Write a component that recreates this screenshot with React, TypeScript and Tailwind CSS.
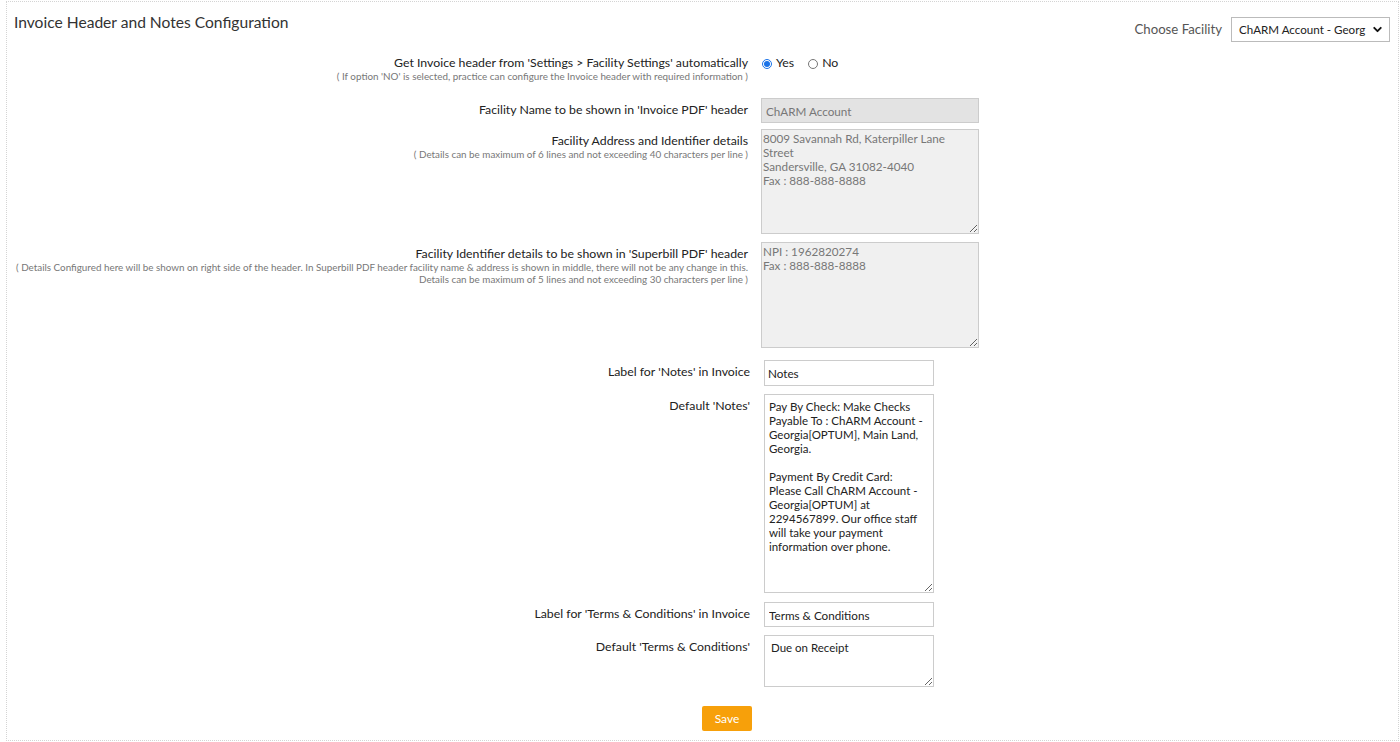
import React from 'react';
import { ChevronDown } from 'lucide-react';

const font = { fontFamily: 'Lato, "Open Sans", Arial, sans-serif' };

function Label({ text, notes = [] as string[] }: { text: string; notes?: string[] }) {
  return (
    <div className="pt-[5px] text-right">
      <div className="text-[12.3px] leading-[14px] text-[#222]">{text}</div>
      {notes.map((n, i) => (
        <div key={i} className="text-[9.85px] leading-[12px] text-[#777]">
          {n}
        </div>
      ))}
    </div>
  );
}

export default function App() {
  const notes =
    'Pay By Check: Make Checks\nPayable To : ChARM Account -\nGeorgia[OPTUM], Main Land,\nGeorgia.\n\nPayment By Credit Card:\nPlease Call ChARM Account -\nGeorgia[OPTUM] at\n2294567899. Our office staff\nwill take your payment\ninformation over phone.';

  return (
    <div className="bg-white min-h-[742px] pt-[1px]" style={font}>
      <div className="ml-[6px] w-[1393px] h-[740px] border border-dotted border-[#d4d4d4] px-[7px]">
        {/* Header */}
        <div className="flex justify-between items-start pt-[10px] pr-[1px]">
          <h1 className="text-[15.6px] leading-[20px] text-[#333] font-normal">
            Invoice Header and Notes Configuration
          </h1>
          <div className="flex items-center gap-[9px] mt-[5px]">
            <span className="text-[13.2px] text-[#555]">Choose Facility</span>
            <div className="relative w-[159px] h-[25px] border border-[#bbb] bg-white flex items-center pl-[7px]">
              <span className="text-[11.6px] text-[#222] whitespace-nowrap">ChARM Account - Georg</span>
              <div className="absolute right-[5px] top-0 bottom-0 flex items-center">
                <ChevronDown size={13} strokeWidth={3.5} className="text-[#111]" />
              </div>
            </div>
          </div>
        </div>

        {/* Row 1 */}
        <div className="flex items-start gap-[13px] mt-[9px]">
          <div className="w-[734px]">
            <Label
              text="Get Invoice header from 'Settings > Facility Settings' automatically"
              notes={["( If option 'NO' is selected, practice can configure the Invoice header with required information )"]}
            />
          </div>
          <div className="flex items-center h-[25px] text-[12.3px] text-[#222]">
            <input type="radio" name="auto" defaultChecked className="w-[10px] h-[10px] m-0 ml-[1px] accent-[#1a73e8]" />
            <span className="ml-[4px] mr-[14px]">Yes</span>
            <input type="radio" name="auto" className="w-[10px] h-[10px] m-0" />
            <span className="ml-[4px]">No</span>
          </div>
        </div>

        {/* Row 2 */}
        <div className="flex items-start gap-[13px] mt-[16px]">
          <div className="w-[734px]">
            <Label text="Facility Name to be shown in 'Invoice PDF' header" />
          </div>
          <input
            disabled
            value="ChARM Account"
            readOnly
            className="w-[218px] h-[25px] border border-[#ccc] bg-[#e3e3e3] pl-[4px] text-[11.7px] text-[#777] outline-none"
          />
        </div>

        {/* Row 3 */}
        <div className="flex items-start gap-[13px] mt-[6px]">
          <div className="w-[734px]">
            <Label
              text="Facility Address and Identifier details"
              notes={['( Details can be maximum of 6 lines and not exceeding 40 characters per line )']}
            />
          </div>
          <textarea
            disabled
            defaultValue={'8009 Savannah Rd, Katerpiller Lane\nStreet\nSandersville, GA 31082-4040\nFax : 888-888-8888'}
            className="w-[218px] h-[105px] border border-[#ccc] bg-[#f0f0f0] pl-[1px] pt-[1px] text-[11.7px] leading-[14px] text-[#777] outline-none resize"
            style={font}
          />
        </div>

        {/* Row 4 */}
        <div className="flex items-start gap-[13px] mt-[8px]">
          <div className="w-[734px]">
            <Label
              text="Facility Identifier details to be shown in 'Superbill PDF' header"
              notes={[
                '( Details Configured here will be shown on right side of the header. In Superbill PDF header facility name & address is shown in middle, there will not be any change in this.',
                'Details can be maximum of 5 lines and not exceeding 30 characters per line )',
              ]}
            />
          </div>
          <textarea
            disabled
            defaultValue={'NPI : 1962820274\nFax : 888-888-8888'}
            className="w-[218px] h-[106px] border border-[#ccc] bg-[#f0f0f0] pl-[1px] pt-[1px] text-[11.7px] leading-[14px] text-[#777] outline-none resize"
            style={font}
          />
        </div>

        {/* Row 5 */}
        <div className="flex items-start gap-[14px] mt-[12px]">
          <div className="w-[736px]">
            <Label text="Label for 'Notes' in Invoice" />
          </div>
          <input
            defaultValue="Notes"
            className="w-[170px] h-[26px] border border-[#ccc] bg-white pl-[3px] text-[11.7px] text-[#222] outline-none"
          />
        </div>

        {/* Row 6 */}
        <div className="flex items-start gap-[14px] mt-[8px]">
          <div className="w-[736px]">
            <Label text="Default 'Notes'" />
          </div>
          <textarea
            defaultValue={notes}
            className="w-[170px] h-[199px] border border-[#ccc] bg-white pl-[4px] pr-[2px] pt-[5px] text-[11.5px] leading-[14px] text-[#222] outline-none resize"
            style={font}
          />
        </div>

        {/* Row 7 */}
        <div className="flex items-start gap-[14px] mt-[9px]">
          <div className="w-[736px]">
            <Label text="Label for 'Terms & Conditions' in Invoice" />
          </div>
          <input
            defaultValue="Terms & Conditions"
            className="w-[170px] h-[25px] border border-[#ccc] bg-white pl-[4px] text-[11.7px] text-[#222] outline-none"
          />
        </div>

        {/* Row 8 */}
        <div className="flex items-start gap-[14px] mt-[8px]">
          <div className="w-[736px]">
            <Label text="Default 'Terms & Conditions'" />
          </div>
          <textarea
            defaultValue="Due on Receipt"
            className="w-[170px] h-[52px] border border-[#ccc] bg-white pl-[6px] pt-[5px] text-[11.5px] leading-[14px] text-[#222] outline-none resize"
            style={font}
          />
        </div>

        <button className="ml-[688px] mt-[19px] w-[50px] h-[25px] rounded-[2px] bg-[#f7a00a] text-white text-[12px]">
          Save
        </button>
      </div>
    </div>
  );
}
